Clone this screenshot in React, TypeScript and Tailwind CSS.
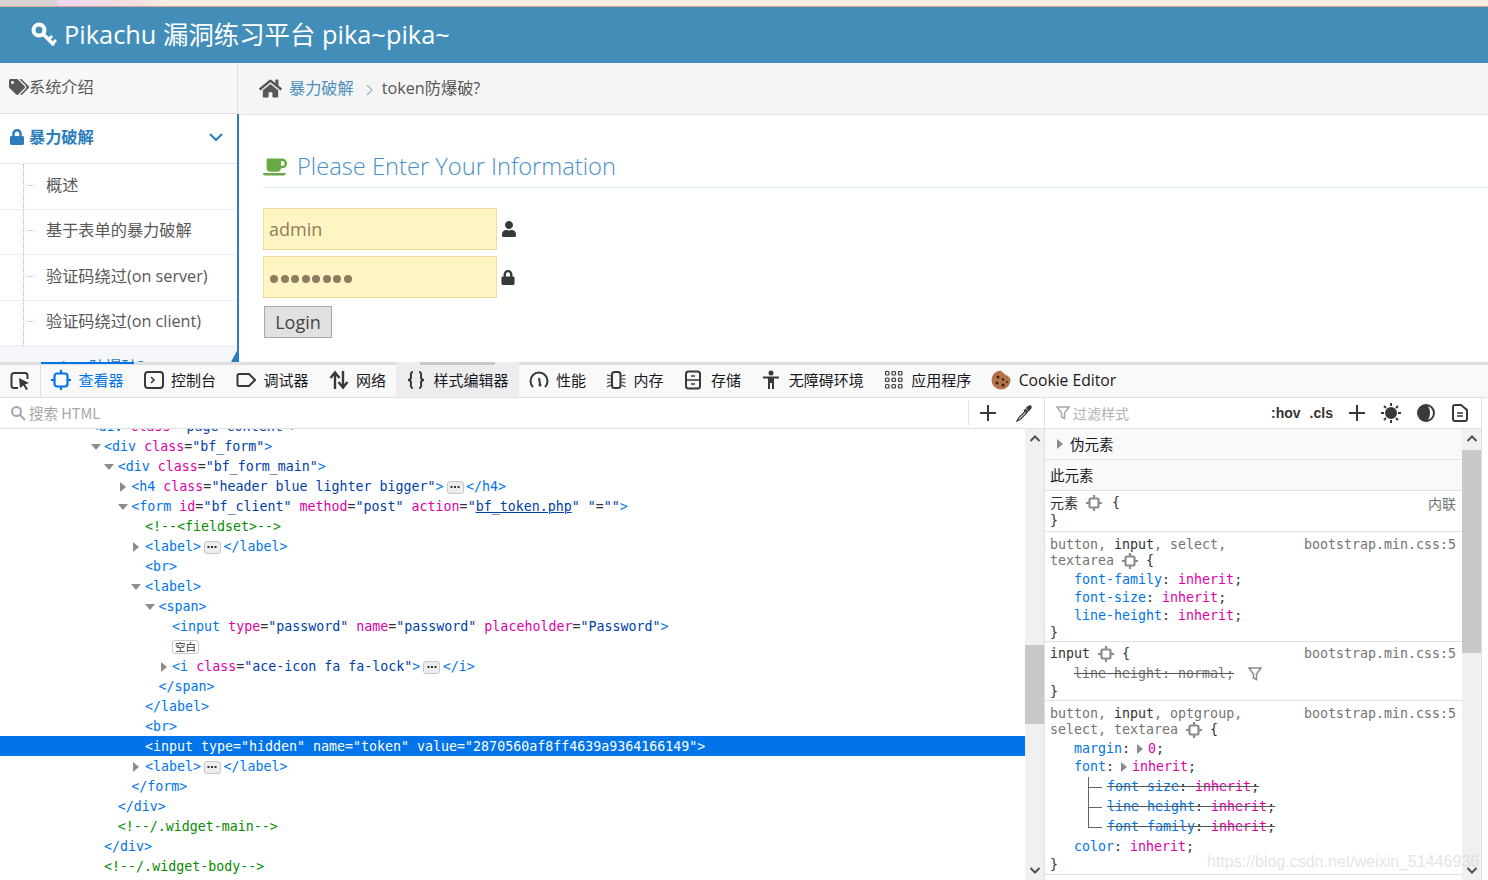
import React from "react";
import { FaCoffee, FaHome, FaLock, FaTags, FaUser } from "react-icons/fa";

const pageFont = { fontFamily: '"Open Sans", "Noto Sans CJK SC", sans-serif' };

type Seg = [string, string];
type Row = { d: number; arrow?: "open" | "closed"; segs: Seg[]; sel?: boolean };

const T = "text-[#0074e8]";
const N = "text-[#dd00a9]";
const V = "text-[#003eaa]";
const G = "text-[#058b00]";
const K = "text-[#333333]";

const tree: Row[] = [
  { d: 0, segs: [["<div ", T], ["class", N], ["=", K], ['"page-content"', V], [">", T]] },
  { d: 1, arrow: "open", segs: [["<div ", T], ["class", N], ["=", K], ['"bf_form"', V], [">", T]] },
  { d: 2, arrow: "open", segs: [["<div ", T], ["class", N], ["=", K], ['"bf_form_main"', V], [">", T]] },
  { d: 3, arrow: "closed", segs: [["<h4 ", T], ["class", N], ["=", K], ['"header blue lighter bigger"', V], [">", T], ["@", ""], ["</h4>", T]] },
  { d: 3, arrow: "open", segs: [["<form ", T], ["id", N], ["=", K], ['"bf_client" ', V], ["method", N], ["=", K], ['"post" ', V], ["action", N], ["=", K], ['"', V], ["bf_token.php", "text-[#003eaa] underline"], ['" ', V], ['"', V], ["=", K], ['""', V], [">", T]] },
  { d: 4, segs: [["<!--<fieldset>-->", G]] },
  { d: 4, arrow: "closed", segs: [["<label>", T], ["@", ""], ["</label>", T]] },
  { d: 4, segs: [["<br>", T]] },
  { d: 4, arrow: "open", segs: [["<label>", T]] },
  { d: 5, arrow: "open", segs: [["<span>", T]] },
  { d: 6, segs: [["<input ", T], ["type", N], ["=", K], ['"password" ', V], ["name", N], ["=", K], ['"password" ', V], ["placeholder", N], ["=", K], ['"Password"', V], [">", T]] },
  { d: 6, segs: [["#", ""]] },
  { d: 6, arrow: "closed", segs: [["<i ", T], ["class", N], ["=", K], ['"ace-icon fa fa-lock"', V], [">", T], ["@", ""], ["</i>", T]] },
  { d: 5, segs: [["</span>", T]] },
  { d: 4, segs: [["</label>", T]] },
  { d: 4, segs: [["<br>", T]] },
  { d: 4, sel: true, segs: [['<input type="hidden" name="token" value="2870560af8ff4639a9364166149">', "text-white"]] },
  { d: 4, arrow: "closed", segs: [["<label>", T], ["@", ""], ["</label>", T]] },
  { d: 3, segs: [["</form>", T]] },
  { d: 2, segs: [["</div>", T]] },
  { d: 2, segs: [["<!--/.widget-main-->", G]] },
  { d: 1, segs: [["</div>", T]] },
  { d: 1, segs: [["<!--/.widget-body-->", G]] },
];

const Tri = ({ open, className = "" }: { open?: boolean; className?: string }) => (
  <svg width="10" height="10" viewBox="0 0 10 10" className={`shrink-0 ${className}`}>
    {open ? <path d="M0 2h10L5 8z" fill="#8c8c8c" /> : <path d="M2 0v10l6-5z" fill="#8c8c8c" />}
  </svg>
);

const Chip = () => (
  <span className="ml-[3px] mr-[2.500px] inline-flex h-[13px] w-[17px] items-center justify-center rounded-[3px] border border-[#c8c8c8] bg-[#ededf0]">
    <svg width="10" height="4" viewBox="0 0 10 4" fill="#333333">
      <rect x="0.500" y="1" width="2" height="2" />
      <rect x="4" y="1" width="2" height="2" />
      <rect x="7.500" y="1" width="2" height="2" />
    </svg>
  </span>
);

const Ico = ({ children, w = 20 }: { children: React.ReactNode; w?: number }) => (
  <svg width={w} height="20" viewBox="0 0 20 20" fill="none" stroke="#38383d" strokeWidth="2" className="shrink-0">
    {children}
  </svg>
);

const tabs: { label: string; icon: React.ReactNode; active?: boolean; sel?: boolean }[] = [
  {
    label: "查看器",
    active: true,
    icon: (
      <svg width="20" height="20" viewBox="0 0 20 20" fill="none" stroke="#0074e8" strokeWidth="2.200" className="shrink-0">
        <rect x="3.500" y="3.500" width="13" height="13" rx="2.500" />
        <path d="M10 0v3M10 17v3M0 10h3M17 10h3" />
      </svg>
    ),
  },
  {
    label: "控制台",
    icon: (
      <Ico>
        <rect x="1" y="2" width="18" height="16" rx="3" />
        <path d="M7 7l3 3-3 3" strokeWidth="1.500" />
      </Ico>
    ),
  },
  {
    label: "调试器",
    icon: (
      <Ico>
        <path d="M3 4h10l6 6-6 6H3a1.500 1.500 0 0 1-1.500-1.500v-9A1.500 1.500 0 0 1 3 4z" />
      </Ico>
    ),
  },
  {
    label: "网络",
    icon: (
      <Ico>
        <path d="M6 19V3M1.500 8L6 2.500 10.500 8M14 1v16M9.500 12l4.500 5.500 4.500-5.500" strokeWidth="2.400" />
      </Ico>
    ),
  },
  {
    label: "样式编辑器",
    sel: true,
    icon: (
      <Ico>
        <path d="M7 2C4 2 5 5 5 7s-1 3-3 3c2 0 3 1 3 3s-1 5 2 5M13 2c3 0 2 3 2 5s1 3 3 3c-2 0-3 1-3 3s1 5-2 5" />
      </Ico>
    ),
  },
  {
    label: "性能",
    icon: (
      <Ico>
        <path d="M4 17A8.500 8.500 0 1 1 16 17" />
        <path d="M10 8l1 6" />
        <circle cx="11" cy="15" r="1.500" fill="#38383d" stroke="none" />
      </Ico>
    ),
  },
  {
    label: "内存",
    icon: (
      <Ico>
        <rect x="6" y="2" width="8.500" height="16" rx="2.500" />
        <path d="M1 5l4 1M1 9h4M1 13l4-1M1 17l4-2M15.500 6l4-1M15.500 9h4M15.500 12l4 1M15.500 15l4 2" strokeWidth="1.200" />
      </Ico>
    ),
  },
  {
    label: "存储",
    icon: (
      <Ico>
        <rect x="2" y="1.500" width="14" height="17" rx="2.500" />
        <path d="M2 10h14M7 6h4M7 14h4" strokeWidth="1.500" />
      </Ico>
    ),
  },
  {
    label: "无障碍环境",
    icon: (
      <svg width="20" height="20" viewBox="0 0 20 20" fill="#38383d" className="shrink-0">
        <circle cx="10" cy="3" r="2.500" />
        <path d="M2 6.500h16v2h-5V19h-2v-6H9v6H7V8.500H2z" />
      </svg>
    ),
  },
  {
    label: "应用程序",
    icon: (
      <Ico>
        <g strokeWidth="1.200">
          <rect x="1.500" y="1.500" width="3.500" height="3.500" rx="1" />
          <rect x="8" y="1.500" width="3.500" height="3.500" rx="1" />
          <rect x="14.500" y="1.500" width="3.500" height="3.500" rx="1" />
          <rect x="1.500" y="8" width="3.500" height="3.500" rx="1" />
          <rect x="8" y="8" width="3.500" height="3.500" rx="1" />
          <rect x="14.500" y="8" width="3.500" height="3.500" rx="1" />
          <rect x="1.500" y="14.500" width="3.500" height="3.500" rx="1" />
          <rect x="8" y="14.500" width="3.500" height="3.500" rx="1" />
          <rect x="14.500" y="14.500" width="3.500" height="3.500" rx="1" />
        </g>
      </Ico>
    ),
  },
  {
    label: "Cookie Editor",
    icon: (
      <svg width="20" height="20" viewBox="0 0 20 20" className="shrink-0">
        <path d="M10 .5c1 1.500 1.500 2 3 2.500.5 1.500 2 2.500 3.500 2.500 1 1.500 3 2 3 4.500a9.500 9.500 0 1 1-9.500-9.500z" fill="#b5734a" />
        <circle cx="7" cy="7" r="1.500" fill="#3b2314" />
        <circle cx="12" cy="9.500" r="1.300" fill="#3b2314" />
        <circle cx="6" cy="13" r="1.500" fill="#3b2314" />
        <circle cx="12" cy="15" r="1.600" fill="#3b2314" />
        <circle cx="16" cy="12" r="1" fill="#3b2314" />
      </svg>
    ),
  },
];

const sideItems = ["概述", "基于表单的暴力破解", "验证码绕过(on server)", "验证码绕过(on client)"];

const Target = ({ className = "" }: { className?: string }) => (
  <svg width="16" height="16" viewBox="0 0 16 16" fill="none" stroke="#8c8c8c" strokeWidth="2.200" className={`inline-block shrink-0 ${className}`}>
    <rect x="3.500" y="3.500" width="9" height="9" rx="1.500" />
    <path d="M8 0v3M8 13v3M0 8h3M13 8h3" />
  </svg>
);

const Source = () => <span className="ml-auto text-[#737373]">bootstrap.min.css:5</span>;
const Gray = ({ children }: { children: React.ReactNode }) => <span className="text-[#737373]">{children}</span>;

const Scrollbar = ({ thumbTop, thumbH }: { thumbTop: string; thumbH: string }) => (
  <div className="relative w-[19px] shrink-0 bg-[#f0f0f0]">
    <svg width="12" height="8" viewBox="0 0 12 8" fill="none" stroke="#505050" strokeWidth="2" className="absolute left-[4px] top-[6px]">
      <path d="M1.500 6L6 1.500 10.500 6" />
    </svg>
    <div className={`absolute left-0 w-full bg-[#c8c8c8] ${thumbTop} ${thumbH}`} />
    <svg width="12" height="8" viewBox="0 0 12 8" fill="none" stroke="#505050" strokeWidth="2" className="absolute bottom-[6px] left-[4px]">
      <path d="M1.500 2L6 6.500 10.500 2" />
    </svg>
  </div>
);

const Decl = ({ name, value, struck }: { name: string; value: string; struck?: boolean }) => (
  <span className={struck ? "line-through decoration-[#555555]" : ""}>
    <span className="text-[#0074e8]">{name}</span>: <span className="text-[#dd00a9]">{value}</span>;
  </span>
);

export default function App() {
  return (
    <div className="relative flex h-[880px] w-[1488px] flex-col overflow-hidden bg-white" style={pageFont}>
      {/* browser strip */}
      <div className="h-[7px] shrink-0 border-b border-[#dba491] bg-[linear-gradient(90deg,#d8d2d2_0,#d8d2d2_55px,#efd8ee_60px,#f8dfe0_135px,#fdeee0_170px,#fdeee0_100%)]" />

      {/* pikachu page */}
      <div className="flex h-[56px] shrink-0 items-center bg-[#438eb9] pl-[31px] text-white">
        <svg width="26" height="26" viewBox="0 0 26 26" fill="none" stroke="white" className="mr-[7px] shrink-0">
          <circle cx="8" cy="8" r="5.500" strokeWidth="4" />
          <path d="M12 12l11 11" strokeWidth="3.600" />
          <path d="M17.500 17.500l3.500-3.500M21.500 21.500l3.500-3.500" strokeWidth="3" />
        </svg>
        <span className="text-[25.400px] leading-none">Pikachu 漏洞练习平台 pika~pika~</span>
      </div>

      <div className="flex h-[299px] shrink-0 overflow-hidden">
        <div className="relative w-[238px] shrink-0 text-[16.200px] text-[#585858]">
          <div className="flex h-[51px] items-center border-r border-b border-[#e0e0e0] bg-[#f8f8f8] pb-[2px] pl-[9px]">
            <FaTags className="h-[20px] w-[20px] shrink-0 text-[#585858]" />
            <span>系统介绍</span>
          </div>
          <div className="-mr-[1px] h-[248px] overflow-hidden border-r-2 border-[#2b7dbc]">
            <div className="flex h-[50px] items-center border-b border-[#e5e5e5] pb-[3px] pl-[9px] pr-[14px] font-bold text-[#2b7dbc]">
              <FaLock className="mr-[4px] h-[16px] w-[16px]" />
              <span>暴力破解</span>
              <svg width="14" height="9" viewBox="0 0 14 9" fill="none" stroke="#2b7dbc" strokeWidth="2" className="ml-auto">
                <path d="M1 1l6 6 6-6" />
              </svg>
            </div>
            <div className="ml-[23px] border-l border-dotted border-[#9dbdd6]">
              {sideItems.map((s) => (
                <div key={s} className="-ml-[24px] flex h-[45.500px] items-center border-b border-dotted border-[#e4e4e4] pb-[3px] pl-[46px]">
                  <span className="relative">
                    <span className="absolute -left-[19px] top-1/2 w-[7px] border-t border-dotted border-[#9dbdd6]" />
                    {s}
                  </span>
                </div>
              ))}
              <div className="-ml-[24px] flex h-[42px] items-center bg-[#f4f6f9] pl-[46px] text-[#2b7dbc]">token防爆破?</div>
            </div>
          </div>
          <div className="absolute bottom-0 right-[-1px] h-0 w-0 border-b-[15px] border-l-[8px] border-b-[#2b7dbc] border-l-transparent" />
        </div>

        <div className="min-w-0 flex-1">
          <div className="flex h-[52px] items-center border-b border-[#e5e5e5] bg-[#f5f5f5] pl-[21px] text-[16.200px]">
            <FaHome className="mr-[7px] h-[23px] w-[23px] text-[#585858]" />
            <span className="text-[#4c8fbd]">暴力破解</span>
            <svg width="7" height="12" viewBox="0 0 7 12" fill="none" stroke="#b2b6bf" strokeWidth="1.500" className="ml-[12px] mr-[9px] mt-[2px]">
              <path d="M1 1l5 5-5 5" />
            </svg>
            <span className="text-[#555555]">token防爆破?</span>
          </div>
          <div className="pl-[25px] pt-[32px]">
            <div className="flex h-[41px] items-center border-b border-[#dce8f1] pb-[1px] text-[23.700px] font-light text-[#478fca]">
              <FaCoffee className="mr-[10px] h-[24px] w-[24px] text-[#69aa46]" />
              Please Enter Your Information
            </div>
            <div className="mt-[20px] flex flex-col">
              <div className="flex items-center">
                <div className="flex h-[42px] w-[234px] items-center border border-[#f5d9a0] bg-[#fff5c2] pl-[5px] text-[18px] text-[#8d7c5f]">admin</div>
                <FaUser className="ml-[4px] h-[16px] w-[16px] text-[#393939]" />
              </div>
              <div className="mt-[6px] flex items-center">
                <div className="flex h-[42px] w-[234px] items-center gap-[2.500px] border border-[#f5d9a0] bg-[#fff5c2] pl-[6px] pt-[3px]">
                  {[1, 2, 3, 4, 5, 6, 7, 8].map((i) => (
                    <span key={i} className="h-[8px] w-[8px] rounded-full bg-[#8d7c5f]" />
                  ))}
                </div>
                <FaLock className="ml-[4px] mt-[1px] h-[15px] w-[14px] text-[#393939]" />
              </div>
              <button className="ml-[1px] mt-[8px] h-[32px] w-[68px] border border-[#a9a9a9] bg-[#e1e1e1] text-[18px] text-[#444444]">Login</button>
            </div>
          </div>
        </div>
      </div>

      {/* devtools */}
      <div className="flex h-[36px] shrink-0 border-t-[3px] border-b border-t-[#e0e0e2] border-b-[#e0e0e2] bg-[#f9f9fa] text-[15px] text-[#18181a]" style={{ fontFamily: '"Noto Sans CJK SC", "Open Sans", sans-serif' }}>
        <div className="flex w-[41px] shrink-0 items-center border-r border-r-[#e0e0e2] pl-[10px]">
          <svg width="20" height="20" viewBox="0 0 20 20" fill="none">
            <path d="M8 17H4a2.500 2.500 0 0 1-2.500-2.500v-10A2.500 2.500 0 0 1 4 2h11a2.500 2.500 0 0 1 2.500 2.500V8" stroke="#38383d" strokeWidth="2" />
            <path d="M9 7l10 5-4 1.500 3 4.500-2 1-2.500-4.500L10 17z" fill="#38383d" />
          </svg>
        </div>
        {tabs.map((t) => (
          <div key={t.label} className={`relative -mt-[3px] flex items-center gap-[7.500px] px-[10px] pt-[2px] pb-[1px] ${t.sel ? "bg-[#ededf0]" : ""} ${t.active ? "text-[#0074e8]" : ""}`}>
            {t.active && <span className="absolute left-0 right-0 top-0 h-[2px] bg-[#0074e8]" />}
            {t.sel && <span className="absolute left-[24px] right-[24px] top-0 h-[3px] bg-[#c8c8c8]" />}
            {t.icon}
            <span className={t.label === "Cookie Editor" ? "pt-[2px] font-['Open_Sans'] text-[15.700px]" : ""}>{t.label}</span>
          </div>
        ))}
      </div>

      <div className="flex min-h-0 flex-1">
        {/* markup panel */}
        <div className="flex w-[1045px] shrink-0 flex-col border-r border-[#e0e0e2]">
          <div className="flex h-[31px] shrink-0 items-center border-b border-[#e0e0e2] pl-[10px] text-[14.500px] text-[#a6a6a6]" style={{ fontFamily: '"Noto Sans CJK SC", sans-serif' }}>
            <svg width="16" height="16" viewBox="0 0 16 16" fill="none" stroke="#a6a6a6" strokeWidth="2" className="mr-[3px]">
              <circle cx="6.500" cy="6.500" r="4.500" />
              <path d="M10 10l5 5" />
            </svg>
            搜索 HTML
            <div className="ml-auto flex h-[24px] items-center border-l border-[#e0e0e2] pl-[10px] pr-[11px]">
              <svg width="18" height="18" viewBox="0 0 18 18" stroke="#38383d" strokeWidth="2">
                <path d="M9 1v16M1 9h16" />
              </svg>
              <svg width="18" height="18" viewBox="0 0 18 18" className="ml-[18px]" fill="none">
                <path d="M9.500 5.500l3 3" stroke="#38383d" strokeWidth="2.500" />
                <path d="M10.500 7L3.500 14 2 17l3-1.500 7-7" stroke="#38383d" strokeWidth="1.200" />
                <path d="M11 4c.5-1 1.500-1.500 2-2 1-1 3-1 3.500 0s0 2.500-1 3.500c-.5.5-1 1.500-2 2z" fill="#38383d" />
              </svg>
            </div>
          </div>
          <div className="flex min-h-0 flex-1">
            <div className="min-w-0 flex-1 overflow-hidden font-['DejaVu_Sans_Mono',monospace] text-[13.300px]">
              <div className="-mt-[13px]">
                {tree.map((r, i) => (
                  <div key={i} className={`flex h-[20px] items-center whitespace-pre pt-[2px] ${r.sel ? "bg-[#0074e8]" : ""}`} style={{ paddingLeft: 77 + r.d * 13.6 }}>
                    <span className="flex w-[13.500px] shrink-0 justify-start">{r.arrow && <Tri open={r.arrow === "open"} />}</span>
                    {r.segs.map(([text, cls], j) =>
                      text === "@" ? (
                        <Chip key={j} />
                      ) : text === "#" ? (
                        <span key={j} className="rounded-[3px] border border-[#c8c8c8] px-[2px] text-[10.500px] leading-[12px] text-[#333333]" style={{ fontFamily: '"Noto Sans CJK SC", sans-serif' }}>
                          空白
                        </span>
                      ) : (
                        <span key={j} className={cls}>
                          {text}
                        </span>
                      ),
                    )}
                  </div>
                ))}
              </div>
            </div>
            <Scrollbar thumbTop="top-[216px]" thumbH="h-[79px]" />
          </div>
        </div>

        {/* rules panel */}
        <div className="flex w-[437px] shrink-0 flex-col border-r border-[#e0e0e2]">
          <div className="flex h-[31px] shrink-0 items-center border-b border-[#e0e0e2] pl-[11px] text-[14px] text-[#b1b1b3]" style={{ fontFamily: '"Noto Sans CJK SC", sans-serif' }}>
            <svg width="14" height="14" viewBox="0 0 14 14" fill="none" stroke="#a6a6a6" strokeWidth="1.500" className="mr-[3px]">
              <path d="M1 1h12L8.500 7v5.500l-3-1.500V7z" />
            </svg>
            过滤样式
            <span className="ml-[142px] text-[14px] font-bold text-[#333333]" style={{ fontFamily: '"Liberation Sans", sans-serif' }}>:hov</span>
            <span className="ml-[9px] text-[14px] font-bold text-[#333333]" style={{ fontFamily: '"Liberation Sans", sans-serif' }}>.cls</span>
            <svg width="16" height="16" viewBox="0 0 16 16" stroke="#38383d" strokeWidth="2" className="ml-[16px]">
              <path d="M8 0v16M0 8h16" />
            </svg>
            <svg width="20" height="20" viewBox="0 0 20 20" stroke="#38383d" strokeWidth="2" className="ml-[16px]">
              <circle cx="10" cy="10" r="5" fill="#38383d" />
              <path d="M10 0v3M10 17v3M0 10h3M17 10h3M3 3l2 2M15 15l2 2M3 17l2-2M15 5l2-2" />
            </svg>
            <svg width="18" height="18" viewBox="0 0 18 18" className="ml-[16px]">
              <circle cx="9" cy="9" r="8" fill="none" stroke="#38383d" strokeWidth="2" />
              <path d="M10 1a8 8 0 1 0 0 16 8 8 0 0 1-4-8 8 8 0 0 1 4-8z" fill="#38383d" />
              <path d="M10 1a8 8 0 0 0 0 16c2-2 3-5 3-8s-1-6-3-8z" fill="#38383d" />
            </svg>
            <svg width="16" height="18" viewBox="0 0 16 18" fill="none" stroke="#38383d" strokeWidth="2" className="ml-[17px]">
              <path d="M3 1h6l6 5v9a2 2 0 0 1-2 2H3a2 2 0 0 1-2-2V3a2 2 0 0 1 2-2z" />
              <path d="M5 9h6M5 12h6" strokeWidth="1.300" />
            </svg>
          </div>
          <div className="flex min-h-0 flex-1">
            <div className="min-w-0 flex-1 overflow-hidden text-[13.300px] text-[#333333] font-['DejaVu_Sans_Mono',monospace]">
              <div className="flex h-[31px] items-center border-b border-[#e0e0e2] bg-[#f9f9fa] pl-[10px] text-[14.500px] text-[#18181a]" style={{ fontFamily: '"Noto Sans CJK SC", sans-serif' }}>
                <Tri className="mr-[5px]" />
                伪元素
              </div>
              <div className="flex h-[31px] items-center border-b border-[#e0e0e2] bg-[#f9f9fa] pl-[5px] text-[14.500px] text-[#18181a]" style={{ fontFamily: '"Noto Sans CJK SC", sans-serif' }}>
                此元素
              </div>
              <div className="h-[41px] border-b border-[#e0e0e2] px-[5px] pt-[3px]">
                <div className="flex h-[18px] items-center pr-[1px]">
                  <span className="-mt-[2px] text-[14px]" style={{ fontFamily: '"Noto Sans CJK SC", sans-serif' }}>元素</span>
                  <Target className="ml-[8px] mr-[10px]" />
                  {"{"}
                  <span className="ml-auto text-[14px] text-[#737373]" style={{ fontFamily: '"Noto Sans CJK SC", sans-serif' }}>内联</span>
                </div>
                <div className="leading-[18px]">{"}"}</div>
              </div>

              <div className="h-[110px] border-b border-[#e0e0e2] pl-[5px] pr-[6px] pt-[5px] leading-[16px]">
                <div className="flex h-[16px] items-center">
                  <Gray>button,</Gray>
                  <span className="ml-[8px]">input</span>
                  <Gray>,</Gray>
                  <span className="ml-[8px] text-[#737373]">select,</span>
                  <Source />
                </div>
                <div className="flex h-[16px] items-center">
                  <Gray>textarea</Gray>
                  <Target className="mx-[8px]" />
                  {"{"}
                </div>
                <div className="mt-[2px] pl-[24px] leading-[18px]">
                  <div><Decl name="font-family" value="inherit" /></div>
                  <div><Decl name="font-size" value="inherit" /></div>
                  <div><Decl name="line-height" value="inherit" /></div>
                </div>
                <div>{"}"}</div>
              </div>

              <div className="h-[59px] border-b border-[#e0e0e2] pl-[5px] pr-[6px] pt-[4px] leading-[16px]">
                <div className="flex h-[16px] items-center">
                  input
                  <Target className="mx-[8px]" />
                  {"{"}
                  <Source />
                </div>
                <div className="mt-[2px] flex h-[20px] items-center pl-[24px]">
                  <span className="text-[#737373] line-through decoration-[#555555]">line-height: normal;</span>
                  <svg width="14" height="14" viewBox="0 0 14 14" fill="none" stroke="#8c8c8c" strokeWidth="1.500" className="ml-[14px]">
                    <path d="M1 1h12L8.500 7v5.500l-3-1.500V7z" />
                  </svg>
                </div>
                <div>{"}"}</div>
              </div>

              <div className="h-[174px] border-b border-[#e0e0e2] pl-[5px] pr-[6px] pt-[5px] leading-[16px]">
                <div className="flex h-[16px] items-center">
                  <Gray>button,</Gray>
                  <span className="ml-[8px]">input</span>
                  <Gray>,</Gray>
                  <span className="ml-[8px] text-[#737373]">optgroup,</span>
                  <Source />
                </div>
                <div className="flex h-[16px] items-center">
                  <Gray>select,</Gray>
                  <span className="ml-[8px] text-[#737373]">textarea</span>
                  <Target className="mx-[8px]" />
                  {"{"}
                </div>
                <div className="mt-[2px] pl-[24px]">
                  <div className="flex h-[18px] items-center">
                    <span className="text-[#0074e8]">margin</span>:
                    <Tri className="ml-[5px] mr-[3px]" />
                    <span className="text-[#dd00a9]">0</span>;
                  </div>
                  <div className="flex h-[18px] items-center">
                    <span className="text-[#0074e8]">font</span>:
                    <Tri className="ml-[5px] mr-[3px]" />
                    <span className="text-[#dd00a9]">inherit</span>;
                  </div>
                  {["font-size", "line-height", "font-family"].map((n, i) => (
                    <div key={n} className={`flex items-center ${i === 0 ? "mt-[1px] h-[20px]" : "h-[20px]"}`}>
                      <span className={`relative ml-[14px] mr-[5px] w-[14px] shrink-0 self-start border-l border-[#666666] ${i === 2 ? "h-[11px]" : "h-[20px]"}`}>
                        <span className="absolute left-0 top-[10px] w-full border-t border-[#666666]" />
                      </span>
                      <Decl name={n} value="inherit" struck />
                    </div>
                  ))}
                  <div className="flex h-[20px] items-center">
                    <span className="text-[#0074e8]">color</span>:&nbsp;
                    <span className="text-[#dd00a9]">inherit</span>;
                  </div>
                </div>
                <div>{"}"}</div>
              </div>
            </div>
            <Scrollbar thumbTop="top-[21px]" thumbH="h-[203px]" />
          </div>
        </div>
      </div>

      <span className="absolute left-[1207px] top-[850px] text-[16px] text-[#d8d8d8]/70" style={{ fontFamily: '"Liberation Sans", sans-serif' }}>
        https://blog.csdn.net/weixin_51446936
      </span>
    </div>
  );
}
